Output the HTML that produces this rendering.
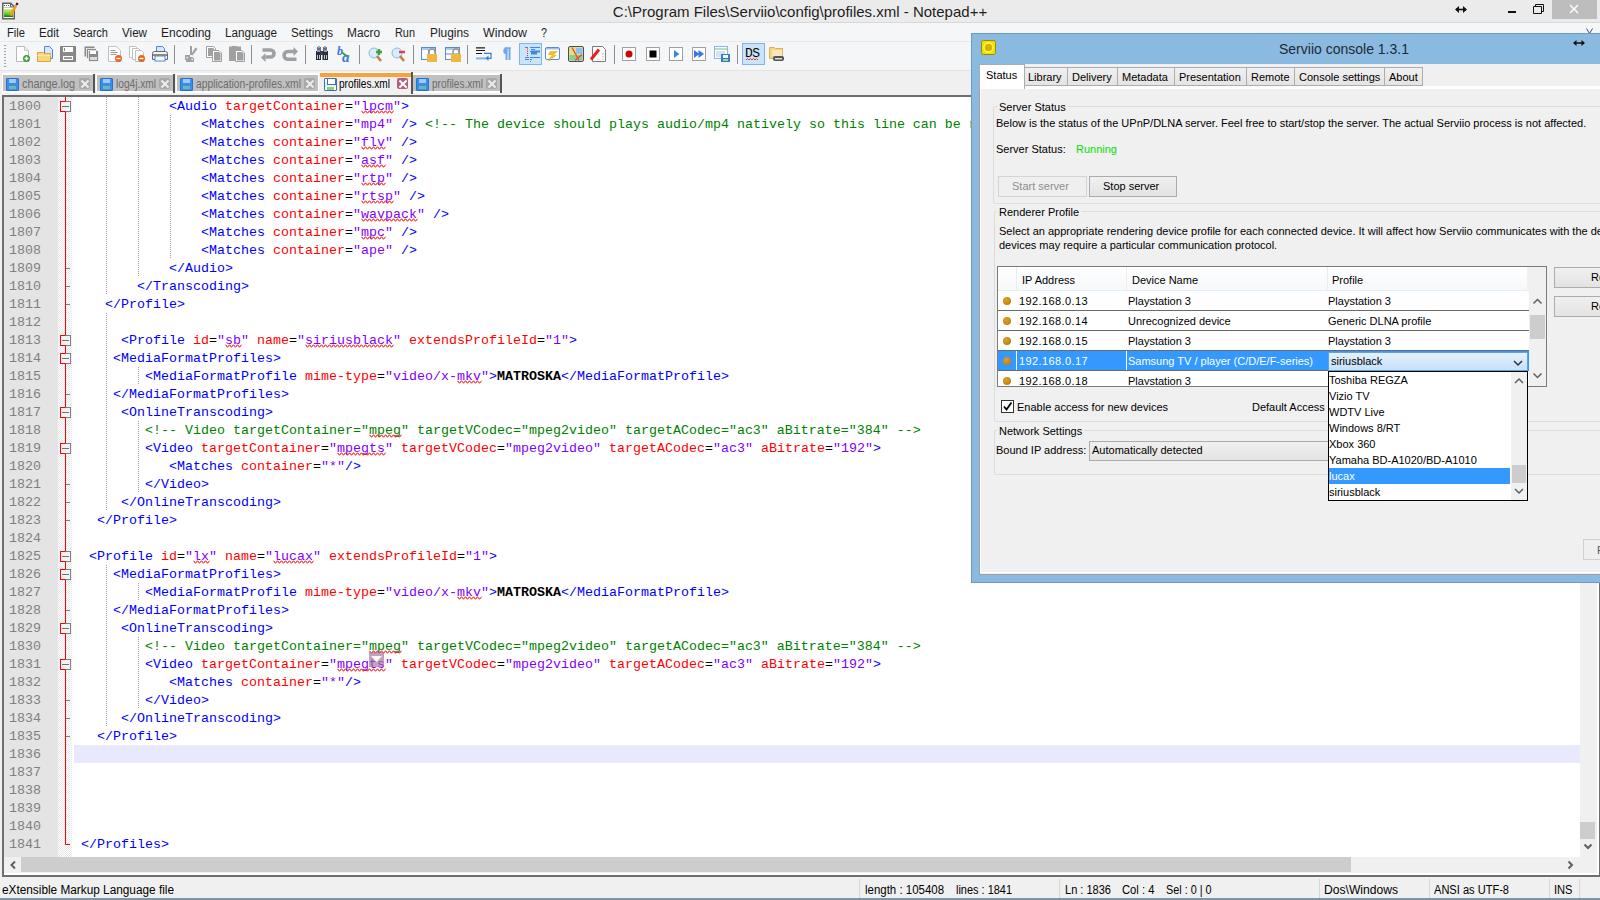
<!DOCTYPE html>
<html><head><meta charset="utf-8">
<style>
*{box-sizing:border-box;margin:0;padding:0}
html,body{width:1600px;height:900px;overflow:hidden;background:#f0f0f0;font-family:"Liberation Sans",sans-serif;font-size:12px;color:#000}
div,span{position:absolute;white-space:pre}
#titlebar{left:0;top:0;width:1600px;height:23px;background:#ebebeb;border-bottom:1px solid #d8d8d8}
#title{left:0;width:1600px;top:3px;text-align:center;font-size:15px;color:#1e1e1e}
#menubar{left:0;top:23px;width:1600px;height:19px;background:#f5f6f7;border-bottom:1px solid #e8e9ea}
.mi{top:3px;font-size:12px;color:#1e1e1e;line-height:14px;transform-origin:0 0}
#toolbar{left:0;top:42px;width:1600px;height:28px;background:#f5f6f7}
#tabbar{left:0;top:70px;width:1600px;height:25px;background:#f0f0f0;border-top:1px solid #e4e4e4}
.tt{font-size:12px;line-height:14px;transform-origin:0 0}
.flop{width:13px;height:13px;background:#3b8ee8;border:1px solid #2a72d0;border-radius:1px}
.flop::before{content:"";position:absolute;left:2px;top:0;width:7px;height:4px;background:#9ccaff}
.flop::after{content:"";position:absolute;left:2px;top:7px;width:7px;height:3px;background:#6cb8b8}
.flop.af{background:#e8f0fa;border-color:#3a70c0}
.flop.af::before{background:#fff;border:1px solid #3a70c0;border-top:none;left:2px;width:7px;height:5px}
.flop.af::after{background:#90d070;top:8px}
.flop.af{box-shadow:inset 0 4px 0 -1px #fff,inset 0 -4px 0 -1px #fff}
.tx{width:11px;height:11px;background:#a8a8a8;border-radius:2px}
.tx::before,.tx::after{content:"";position:absolute;left:0.5px;top:4.5px;width:10px;height:2px;background:#ececec;transform:rotate(45deg)}
.tx::after{transform:rotate(-45deg)}
.tx.ax{background:#b0607a}
.tx.ax::before,.tx.ax::after{background:#fff}
#edframe{left:2px;top:95px;width:1598px;height:782px;border-top:2px solid #6e6e6e;border-left:2px solid #6e6e6e;border-right:1px solid #6e6e6e;border-bottom:2px solid #6e6e6e;background:#fff}
#lnbg{left:4px;top:97px;width:54px;height:760px;background:#e4e4e4}
#foldbg{left:58px;top:97px;width:14px;height:760px;background-color:#fff;background-image:conic-gradient(#e6e6e6 25%,#fff 0 50%,#e6e6e6 0 75%,#fff 0);background-size:2px 2px}
.ln{left:4px;width:37px;text-align:right;font-family:"Liberation Mono",monospace;font-size:13.33px;line-height:18px;height:18px;color:#808080}
.cl{font-family:"Liberation Mono",monospace;font-size:13.33px;line-height:18px;height:18px;color:#000}
.cl span{position:static}
.t{color:#0000ff}.a{color:#ff0000}.v{color:#8000ff}.c{color:#008000}.b{font-weight:bold;color:#000}
.vs{color:#8000ff}
.cs{color:#008000}
.ig{width:1px;background-image:linear-gradient(#a0a0a0 50%,transparent 50%);background-size:1px 2px}
#curline{left:74px;top:745px;width:1506px;height:18px;background:#e8e8ff}
#vscroll{left:1580px;top:97px;width:17px;height:776px;background:#f0f0f0}
#vthumb{left:1580px;top:822px;width:15px;height:17px;background:#cdcdcd}
#hscroll{left:4px;top:857px;width:1576px;height:16px;background:#f0f0f0}
#hthumb{left:21px;top:857px;width:1330px;height:15px;background:#cdcdcd}
#edbot{left:4px;top:873px;width:1595px;height:2px;background:#fff}
#edright{left:1597px;top:97px;width:2px;height:778px;background:#fff}
#statusbar{left:0;top:877px;width:1600px;height:21px;background:#f0f0f0}
.sb{top:6px;transform-origin:0 0;font-size:12px;color:#000;line-height:14px}
.sbsep{top:2px;width:1px;height:19px;background:#d7d7d7}
#taskline{left:0;top:898px;width:1600px;height:2px;background:#7a96ae}
/* dialog */
#dlg{left:971px;top:33px;width:640px;height:548px;background:#8bbae0;border:1px solid #6a98c4}
#dtitle{left:308px;top:6px;font-size:14px;color:#1e2a36}
#dicon{left:12px;top:7px;width:15px;height:15px;background:#f0e000;border:1px solid #9a8a00;border-radius:2px}
#dicon::after{content:"";position:absolute;left:2px;top:2px;width:9px;height:9px;border:1.5px solid #fff86a;border-radius:50%;background:#d8b800}
#dbody{left:7px;top:30px;width:640px;height:510px;background:#f0f0f0}
.dt{font-size:11px;color:#000;line-height:13px}
.dtab{top:33px;height:19px;background:linear-gradient(#f0f0f0,#e5e5e5);border:1px solid #acacac;border-bottom:none}
.dtab .dt{top:3px}
.dtab.sel{top:31px;height:23px;background:#fff;border-color:#acacac}
.dtab.sel .dt{top:2px}
#dpanel{left:8px;top:54px;width:640px;height:486px;background:#f0f0f0;border-top:1px solid #acacac;border-left:1px solid #d9d9d9}
.grp{border:1px solid #d5dfe5;border-radius:2px}
.gtitle{background:#f0f0f0;padding:0 2px}
.btn{height:21px;border:1px solid #adadad;background:linear-gradient(#f2f2f2,#e1e1e1);border-radius:2px}
.btn.dis{border-color:#d0d0d0;background:#f0f0f0}
.btn .dt{top:3px;width:100%;text-align:center}
#table{left:1px;top:1px}
.row{height:20px;background:#fff;border-bottom:1px solid #6f6f6f}
.dot{width:8px;height:8px;border-radius:50%;background:radial-gradient(circle at 40% 35%,#e0a030,#b07800)}
</style></head><body>
<div id="titlebar"></div>
<svg width="22" height="22" style="position:absolute;left:0;top:0"><defs><linearGradient id="ng" x1="0" y1="0" x2="0" y2="1"><stop offset="0" stop-color="#e8ec60"/><stop offset=".6" stop-color="#60d030"/><stop offset="1" stop-color="#107010"/></linearGradient></defs><path d="M2.75 3.25h8l3.5 3.5v12h-11.5z" fill="#fff" stroke="#606060" stroke-width="1.5"/><path d="M10.5 3.5v3.5h3.5" fill="none" stroke="#606060" stroke-width="1.2"/><path d="M4 5.5h1M6 5.5h1M8 5.5h1" stroke="#555" stroke-width="1"/><path d="M4 7.5h6" stroke="#b8c8e0" stroke-width="1"/><rect x="4" y="9" width="9" height="8" fill="url(#ng)"/><path d="M10.5 15.5l5.5-10" stroke="#f0a010" stroke-width="2.6"/><path d="M15.8 5.8l.9-1.6" stroke="#90a8d0" stroke-width="2.4"/><rect x="16" y="2.8" width="2.2" height="2.2" fill="#900000"/></svg>
<div id="title">C:\Program Files\Serviio\config\profiles.xml - Notepad++</div>
<svg width="160" height="20" style="position:absolute;left:1440px;top:0"><path d="M16 9.5h10" stroke="#111" stroke-width="1.6"/><path d="M15 9.5l4-3.5v7zM27 9.5l-4-3.5v7z" fill="#111"/><rect x="68" y="11" width="8" height="2" fill="#111"/><path d="M93.5 6.5h8v7h-8zM95.5 6.5v-2h8v7h-2" fill="none" stroke="#111" stroke-width="1"/><rect x="112" y="0" width="45" height="19" fill="#bdbdbd"/><path d="M130 5l8 8M138 5l-8 8" stroke="#fff" stroke-width="1.4"/></svg>
<div id="menubar">
<span class="mi" style="left:7px;transform:scaleX(0.931)">File</span>
<span class="mi" style="left:39px;transform:scaleX(0.967)">Edit</span>
<span class="mi" style="left:73px;transform:scaleX(0.920)">Search</span>
<span class="mi" style="left:122px;transform:scaleX(0.969)">View</span>
<span class="mi" style="left:161px;transform:scaleX(0.999)">Encoding</span>
<span class="mi" style="left:225px;transform:scaleX(0.974)">Language</span>
<span class="mi" style="left:291px;transform:scaleX(0.969)">Settings</span>
<span class="mi" style="left:347px;transform:scaleX(0.990)">Macro</span>
<span class="mi" style="left:395px;transform:scaleX(0.908)">Run</span>
<span class="mi" style="left:430px;transform:scaleX(0.991)">Plugins</span>
<span class="mi" style="left:483px;transform:scaleX(1.031)">Window</span>
<span class="mi" style="left:541px;transform:scaleX(0.897)">?</span>
</div>
<svg width="10" height="8" style="position:absolute;left:1585px;top:27px"><path d="M1.5 1.5l3 5 3-5" fill="none" stroke="#3a4a8a" stroke-width="1"/></svg>
<div id="toolbar"></div>
<svg width="1600" height="28" style="position:absolute;left:0;top:42px"><rect x="4" y="3" width="2" height="1" fill="#a0a0a0"/><rect x="4" y="6" width="2" height="1" fill="#a0a0a0"/><rect x="4" y="9" width="2" height="1" fill="#a0a0a0"/><rect x="4" y="12" width="2" height="1" fill="#a0a0a0"/><rect x="4" y="15" width="2" height="1" fill="#a0a0a0"/><rect x="4" y="18" width="2" height="1" fill="#a0a0a0"/><rect x="4" y="21" width="2" height="1" fill="#a0a0a0"/><rect x="4" y="24" width="2" height="1" fill="#a0a0a0"/><g transform="translate(15,4)"><path d="M1.5 .5h8l4 4v11h-12z" fill="#fff" stroke="#b8b8b8"/><path d="M9.5 .5v4h4" fill="#eee" stroke="#c8c8c8"/><circle cx="11.5" cy="12.5" r="3.5" fill="#3a9a3a"/><path d="M9.5 12.5h4M11.5 10.5v4" stroke="#fff" stroke-width="1.4"/></g><g transform="translate(37,4)"><path d="M7.5 .5h5l3 3v9h-8z" fill="#d6e8fb" stroke="#4a86d8"/><path d="M.5 6.5h6l1 1h6v8h-13z" fill="#f6d77a" stroke="#e0a040"/><path d="M.5 9.5h13" stroke="#fbe9a8"/></g><g transform="translate(60,4)"><path d="M.5 .5h15v15h-15z" fill="#8a8a8a" stroke="#808080"/><rect x="3" y="1" width="10" height="5" fill="#fff"/><rect x="4" y="2" width="1" height="3" fill="#888"/><rect x="3" y="10" width="10" height="4" fill="#fff"/><rect x="4" y="11" width="8" height="2" fill="#999"/></g><g transform="translate(84,4)"><rect x=".5" y=".5" width="10" height="10" fill="#8a8a8a"/><rect x="2.5" y="2.5" width="10" height="10" fill="#8a8a8a" stroke="#f5f6f7" stroke-width=".8"/><rect x="4.5" y="4.5" width="10" height="11" fill="#8a8a8a" stroke="#f5f6f7" stroke-width=".8"/><rect x="6" y="5" width="6" height="3" fill="#fff"/><rect x="6" y="11" width="7" height="3" fill="#ddd"/></g><g transform="translate(107,4)"><path d="M1.5 .5h8l4 4v11h-12z" fill="#fff" stroke="#c0c0c0"/><path d="M3.5 4.5h5M3.5 6.5h7M3.5 8.5h6" stroke="#999"/><circle cx="11.5" cy="12.5" r="3.5" fill="#e8641e"/><path d="M9.5 12.5h4" stroke="#fff" stroke-width="1.4"/></g><g transform="translate(129,4)"><path d="M.5 .5h6l2 2v9h-8z" fill="#fff" stroke="#c0c0c0"/><path d="M3.5 2.5h6l2 2v9h-8z" fill="#fff" stroke="#c0c0c0"/><path d="M6.5 4.5h6l2 2v9h-8z" fill="#fff" stroke="#c0c0c0"/><circle cx="12.5" cy="12.5" r="3.5" fill="#e8641e"/><path d="M10.5 12.5h4" stroke="#fff" stroke-width="1.4"/></g><g transform="translate(152,4)"><path d="M4.5 .5h6l2 2v5h-8z" fill="#d6e8fb" stroke="#4a86d8"/><path d="M.5 7.5q0-2 2-2h11q2 0 2 2v6h-15z" fill="#f4f4f4" stroke="#666"/><rect x="3" y="10" width="10" height="5" fill="#fff" stroke="#4a86d8" stroke-width="1"/><rect x="1" y="8" width="14" height="2" fill="#888"/></g><rect x="174" y="3" width="1" height="19" fill="#8e8e8e"/><g transform="translate(184,4)"><path d="M6 0h2v9h-2z" fill="#a0a0a0"/><path d="M11.5 1.5l2 1.5-5 6.5-1.5-1z" fill="#a0a0a0"/><path d="M1 9h5v2h1v5h-5v-2h-1z" fill="#a0a0a0"/><rect x="2.5" y="10.8" width="1.6" height="1.6" fill="#f5f6f7"/><rect x="7.3" y="12.3" width="1.6" height="2" fill="#f5f6f7"/><path d="M6 11h3v1h1v4h-4z" fill="#a0a0a0"/><rect x="7.5" y="12.5" width="1.4" height="1.8" fill="#f5f6f7"/></g><g transform="translate(206,4)"><path d="M.5 .5h7l2 2v3h-3v6h-6z" fill="#fff" stroke="#a0a0a0"/><path d="M2 2h5l1.5 1.5v2h-2.5v4.5h-4z" fill="#a0a0a0"/><path d="M6.5 4.5h6.5l2.5 2.5v8.5h-9z" fill="#fff" stroke="#a0a0a0"/><path d="M8 6h5l1.5 1.5v7h-6.5z" fill="#a0a0a0"/></g><g transform="translate(229,4)"><path d="M0 .5h3v-.5h5v.5h4v14.5h-12z" fill="#a0a0a0"/><path d="M6.5 4.5h6.5l2.5 2.5v8.5h-9z" fill="#fff" stroke="#a0a0a0"/><path d="M8 6h5l1.5 1.5v7h-6.5z" fill="#a0a0a0"/></g><rect x="251" y="3" width="1" height="19" fill="#8e8e8e"/><g transform="translate(261,4)"><path d="M1.5 4h8a3.5 3.5 0 010 7h-5" fill="none" stroke="#a0a0a0" stroke-width="3.6"/><path d="M0 11.5l4.5-4.5v9z" fill="#a0a0a0"/></g><g transform="translate(283,4)"><path d="M11 5.5h-6a3.9 3.9 0 000 7.8h8.5" fill="none" stroke="#a0a0a0" stroke-width="3.6"/><path d="M15 5.5l-4.5-4.5v9z" fill="#a0a0a0"/></g><rect x="305" y="3" width="1" height="19" fill="#8e8e8e"/><g transform="translate(315,4)"><rect x="2" y="1" width="4" height="4" fill="#6a7080"/><rect x="8" y="1" width="4" height="4" fill="#6a7080"/><rect x="3" y="0" width="2" height="2" fill="#9aa8c0"/><rect x="9" y="0" width="2" height="2" fill="#9aa8c0"/><path d="M1 5h5v9h-5z" fill="#2a2e38"/><path d="M7.5 5h5.5v9h-5.5z" fill="#2a2e38"/><rect x="5" y="5" width="3" height="4" fill="#3a4050"/><rect x="2" y="4" width="3" height="2" fill="#8fa0c0"/><rect x="9" y="4" width="3" height="2" fill="#8fa0c0"/><rect x="2" y="9" width="1" height="4" fill="#c0c8d8"/><rect x="4" y="9" width="1" height="4" fill="#c0c8d8"/><rect x="9" y="9" width="1" height="4" fill="#c0c8d8"/><rect x="11" y="9" width="1" height="4" fill="#c0c8d8"/></g><g transform="translate(337,4)"><text x="0" y="9" font-family="Liberation Serif" font-style="italic" font-weight="bold" font-size="12" fill="#3a78e0">b</text><text x="5" y="15.5" font-family="Liberation Serif" font-style="italic" font-weight="bold" font-size="15" fill="#3a78e0">a</text><path d="M5 6.5l4.5 3.5" stroke="#30a050" stroke-width="1.6"/><path d="M10.5 11l-3.5-.5 2-2.5z" fill="#30a050"/></g><rect x="359" y="3" width="1" height="19" fill="#8e8e8e"/><g transform="translate(368,4)"><circle cx="6" cy="7" r="5" fill="#d8ecfb" stroke="#8ab8e0"/><path d="M9 10l4 5" stroke="#c08040" stroke-width="2.5"/><path d="M8 6h6M11 3v6" stroke="#40a040" stroke-width="2.5"/></g><g transform="translate(391,4)"><circle cx="6" cy="7" r="5" fill="#d8ecfb" stroke="#8ab8e0"/><path d="M9 10l4 5" stroke="#c08040" stroke-width="2.5"/><path d="M8 6h6" stroke="#e04050" stroke-width="2.5"/></g><rect x="413" y="3" width="1" height="19" fill="#8e8e8e"/><g transform="translate(421,4)"><rect x=".5" y="1.5" width="14" height="12" fill="#fff" stroke="#5a8ad0"/><rect x="1" y="2" width="13" height="2" fill="#a8c8ec"/><path d="M7.5 4v9" stroke="#5a8ad0"/><rect x="6" y="8" width="10" height="8" fill="#f0b840"/><path d="M8 8V6a3 3 0 016 0v2" fill="none" stroke="#999" stroke-width="1.5"/></g><g transform="translate(445,4)"><rect x=".5" y="1.5" width="14" height="12" fill="#fff" stroke="#5a8ad0"/><rect x="1" y="2" width="13" height="2" fill="#a8c8ec"/><path d="M1 8h13" stroke="#5a8ad0"/><rect x="6" y="8" width="10" height="8" fill="#f0b840"/><path d="M8 8V6a3 3 0 016 0v2" fill="none" stroke="#999" stroke-width="1.5"/></g><rect x="467" y="3" width="1" height="19" fill="#8e8e8e"/><g transform="translate(475,4)"><path d="M1 1.8h9M1 4.5h9M1 7.5h6" stroke="#1a1a1a" stroke-width="1.2"/><path d="M1 12.4h10" stroke="#80b4ea" stroke-width="2"/><path d="M9 7.3h7v5h-4" fill="none" stroke="#3a7ad8" stroke-width="1.2"/><path d="M10.5 12.3l3-2.8v5.6z" fill="#3a7ad8"/></g><g transform="translate(500,4)"><path d="M6.5 2v12M9.5 2v12" stroke="#70aaea" stroke-width="2"/><path d="M4.5 2h6.5" stroke="#70aaea" stroke-width="1.5"/><path d="M6.5 2.5a2.5 2.5 0 000 5z" fill="#70aaea" stroke="#70aaea" stroke-width="1.5"/></g><rect x="519.5" y="1.5" width="22" height="21" fill="#cce4f7" stroke="#7eb4ea"/><g transform="translate(522,4)"><path d="M5.5 2.5v8" stroke="#e02020" stroke-dasharray="1 1.2"/><path d="M3 1.5h3M8 1.5h10M9 3.5h4M8 5.5h10M9 7.5h6M3 11.5h4M8 11.5h10M3 13.5h4M8 13.5h2" stroke="#3a88e8" stroke-width="1"/><path d="M9 5.5h9M9 7.5h6" stroke="#3a88e8" stroke-width="2"/><rect x="8" y="15" width="1" height="1" fill="#3a88e8"/></g><g transform="translate(545,4)"><rect x=".5" y="1.5" width="14" height="12" rx="1.5" fill="#fff" stroke="#5a8ad0"/><rect x="1" y="2" width="13" height="1.5" fill="#9cc0ec"/><path d="M5 5h8l-4 4h3l-4 3.5h-4l3-3.5h-4z" fill="#f0c030"/><path d="M5.5 12l-1.5 3" stroke="#e8b020" stroke-width="1.5"/></g><g transform="translate(568,4)"><rect x=".5" y=".5" width="15" height="15" rx="1.5" fill="#e2e27a" stroke="#4a4a70"/><rect x="8" y="2" width="6.5" height="6" fill="#90c0f0"/><rect x="1.5" y="9" width="13" height="5.5" fill="#88d088"/><path d="M4 1.5l7 13M14 8.5l-7 6" stroke="#f04040" stroke-width="1.3"/></g><g transform="translate(591,4)"><path d="M1.5 .5h10l3 3v12h-13z" fill="#fff" stroke="#7a7a7a"/><path d="M0 13.5l8-10" stroke="#e82020" stroke-width="3"/><path d="M12 7v7" stroke="#b0b0b0" stroke-dasharray="1.5 1.5"/><circle cx="7" cy="8" r=".6" fill="#90c090"/><circle cx="7" cy="13" r=".6" fill="#90c090"/></g><rect x="614" y="3" width="1" height="19" fill="#8e8e8e"/><g transform="translate(622,4)"><rect x=".5" y="1.5" width="13" height="13" fill="#fff" stroke="#a0a0a0"/><circle cx="7" cy="8" r="3.5" fill="#d00000"/></g><g transform="translate(646,4)"><rect x=".5" y="1.5" width="13" height="13" fill="#fff" stroke="#a0a0a0"/><rect x="3.5" y="4.5" width="7" height="7" fill="#000"/></g><g transform="translate(669,4)"><rect x=".5" y="1.5" width="13" height="13" fill="#fff" stroke="#a0a0a0"/><path d="M5 4l5.5 4-5.5 4z" fill="#3a88e0"/></g><g transform="translate(692,4)"><rect x=".5" y="1.5" width="13" height="13" fill="#fff" stroke="#a0a0a0"/><path d="M2 4l5.5 4-5.5 4zM6.5 4l5.5 4-5.5 4z" fill="#3a78e0"/></g><g transform="translate(714,4)"><rect x=".5" y=".5" width="13" height="12" fill="#fff" stroke="#8ab8e0"/><path d="M1 3h12" stroke="#70c070"/><path d="M2 6h9M2 8h9M2 10h6" stroke="#a8c8ec"/><rect x="7" y="8" width="9" height="8" fill="#3a78d0"/><rect x="9" y="9" width="5" height="3" fill="#fff"/><rect x="9" y="13" width="5" height="2" fill="#90e090"/></g><rect x="737" y="3" width="1" height="19" fill="#8e8e8e"/><rect x="742.5" y="1.5" width="22" height="21" fill="#cce4f7" stroke="#7eb4ea"/><g transform="translate(745,4)"><text x="0" y="11" font-family="Liberation Mono" font-size="13" fill="#000" letter-spacing="-0.5">DS</text><path d="M1 14l1.5-1.5 1.5 1.5 1.5-1.5 1.5 1.5 1.5-1.5 1.5 1.5 1.5-1.5 1.5 1.5" stroke="#e03020" fill="none" stroke-width=".9"/></g><g transform="translate(769,4)"><path d="M.5 1.5h5l1 1h7v10h-13z" fill="#f6d77a" stroke="#d8b060"/><rect x="3" y="4" width="10" height="6" fill="#fbe4b8"/><rect x="4" y="10" width="11" height="5" rx="2" fill="#555"/><rect x="6" y="12" width="7" height="1.5" fill="#ddd"/></g></svg>
<div id="tabbar"></div>
<div style="left:2px;top:73px;width:92px;height:20px;background:#fff"></div>
<div style="left:3px;top:75px;width:90px;height:16px;background:#c0c0c0"></div>
<div class="flop" style="left:6px;top:78px"></div>
<span class="tt" style="left:22px;top:77px;font-size:13px;color:#6d6d6d;transform:scaleX(0.833)">change.log</span>
<div class="tx" style="left:79px;top:78px"></div>
<div style="left:96px;top:73px;width:78px;height:20px;background:#fff"></div>
<div style="left:97px;top:75px;width:76px;height:16px;background:#c0c0c0"></div>
<div class="flop" style="left:100px;top:78px"></div>
<span class="tt" style="left:116px;top:77px;font-size:13px;color:#6d6d6d;transform:scaleX(0.780)">log4j.xml</span>
<div class="tx" style="left:159px;top:78px"></div>
<div style="left:176px;top:73px;width:143px;height:20px;background:#fff"></div>
<div style="left:177px;top:75px;width:141px;height:16px;background:#c0c0c0"></div>
<div class="flop" style="left:180px;top:78px"></div>
<span class="tt" style="left:196px;top:77px;font-size:13px;color:#6d6d6d;transform:scaleX(0.794)">application-profiles.xml</span>
<div class="tx" style="left:304px;top:78px"></div>
<div style="left:319px;top:72px;width:92px;height:23px;background:#f0f0f0;border-top:1px solid #fff"></div>
<div style="left:320px;top:73px;width:91px;height:4px;background:#f9a13a"></div>
<div class="flop af" style="left:324px;top:78px"></div>
<span class="tt" style="left:339px;top:77px;font-size:13px;color:#000;transform:scaleX(0.776)">profiles.xml</span>
<div class="tx ax" style="left:397px;top:78px"></div>
<div style="left:412px;top:73px;width:89px;height:20px;background:#fff"></div>
<div style="left:413px;top:75px;width:87px;height:16px;background:#c0c0c0"></div>
<div class="flop" style="left:416px;top:78px"></div>
<span class="tt" style="left:432px;top:77px;font-size:13px;color:#6d6d6d;transform:scaleX(0.776)">profiles.xml</span>
<div class="tx" style="left:486px;top:78px"></div>
<div style="left:93px;top:74px;width:2px;height:19px;background:#555"></div>
<div style="left:173px;top:74px;width:2px;height:19px;background:#555"></div>
<div style="left:411px;top:72px;width:2px;height:22px;background:#555"></div>
<div style="left:500px;top:74px;width:2px;height:19px;background:#555"></div>
<div id="edframe"></div>
<div id="lnbg"></div>
<div id="foldbg"></div>
<div id="curline"></div>
<div class="ln" style="top:98px">1800</div>
<div class="ln" style="top:116px">1801</div>
<div class="ln" style="top:134px">1802</div>
<div class="ln" style="top:152px">1803</div>
<div class="ln" style="top:170px">1804</div>
<div class="ln" style="top:188px">1805</div>
<div class="ln" style="top:206px">1806</div>
<div class="ln" style="top:224px">1807</div>
<div class="ln" style="top:242px">1808</div>
<div class="ln" style="top:260px">1809</div>
<div class="ln" style="top:278px">1810</div>
<div class="ln" style="top:296px">1811</div>
<div class="ln" style="top:314px">1812</div>
<div class="ln" style="top:332px">1813</div>
<div class="ln" style="top:350px">1814</div>
<div class="ln" style="top:368px">1815</div>
<div class="ln" style="top:386px">1816</div>
<div class="ln" style="top:404px">1817</div>
<div class="ln" style="top:422px">1818</div>
<div class="ln" style="top:440px">1819</div>
<div class="ln" style="top:458px">1820</div>
<div class="ln" style="top:476px">1821</div>
<div class="ln" style="top:494px">1822</div>
<div class="ln" style="top:512px">1823</div>
<div class="ln" style="top:530px">1824</div>
<div class="ln" style="top:548px">1825</div>
<div class="ln" style="top:566px">1826</div>
<div class="ln" style="top:584px">1827</div>
<div class="ln" style="top:602px">1828</div>
<div class="ln" style="top:620px">1829</div>
<div class="ln" style="top:638px">1830</div>
<div class="ln" style="top:656px">1831</div>
<div class="ln" style="top:674px">1832</div>
<div class="ln" style="top:692px">1833</div>
<div class="ln" style="top:710px">1834</div>
<div class="ln" style="top:728px">1835</div>
<div class="ln" style="top:746px">1836</div>
<div class="ln" style="top:764px">1837</div>
<div class="ln" style="top:782px">1838</div>
<div class="ln" style="top:800px">1839</div>
<div class="ln" style="top:818px">1840</div>
<div class="ln" style="top:836px">1841</div>
<svg width="14" height="760" style="position:absolute;left:58px;top:97px"><path d="M7.5 0V747.5H12" fill="none" stroke="#ff0000" stroke-width="1"/><rect x="2.5" y="4.5" width="10" height="10" fill="#f3f3f3" stroke="#808080"/><path d="M7.5 4.5H2.5V14.5H7.5" fill="none" stroke="#ff0000"/><path d="M4 9.5H11" stroke="#707070"/><rect x="2.5" y="238.5" width="10" height="10" fill="#f3f3f3" stroke="#808080"/><path d="M7.5 238.5H2.5V248.5H7.5" fill="none" stroke="#ff0000"/><path d="M4 243.5H11" stroke="#707070"/><rect x="2.5" y="256.5" width="10" height="10" fill="#f3f3f3" stroke="#808080"/><path d="M7.5 256.5H2.5V266.5H7.5" fill="none" stroke="#ff0000"/><path d="M4 261.5H11" stroke="#707070"/><rect x="2.5" y="310.5" width="10" height="10" fill="#f3f3f3" stroke="#808080"/><path d="M7.5 310.5H2.5V320.5H7.5" fill="none" stroke="#ff0000"/><path d="M4 315.5H11" stroke="#707070"/><rect x="2.5" y="346.5" width="10" height="10" fill="#f3f3f3" stroke="#808080"/><path d="M7.5 346.5H2.5V356.5H7.5" fill="none" stroke="#ff0000"/><path d="M4 351.5H11" stroke="#707070"/><rect x="2.5" y="454.5" width="10" height="10" fill="#f3f3f3" stroke="#808080"/><path d="M7.5 454.5H2.5V464.5H7.5" fill="none" stroke="#ff0000"/><path d="M4 459.5H11" stroke="#707070"/><rect x="2.5" y="472.5" width="10" height="10" fill="#f3f3f3" stroke="#808080"/><path d="M7.5 472.5H2.5V482.5H7.5" fill="none" stroke="#ff0000"/><path d="M4 477.5H11" stroke="#707070"/><rect x="2.5" y="526.5" width="10" height="10" fill="#f3f3f3" stroke="#808080"/><path d="M7.5 526.5H2.5V536.5H7.5" fill="none" stroke="#ff0000"/><path d="M4 531.5H11" stroke="#707070"/><rect x="2.5" y="562.5" width="10" height="10" fill="#f3f3f3" stroke="#808080"/><path d="M7.5 562.5H2.5V572.5H7.5" fill="none" stroke="#ff0000"/><path d="M4 567.5H11" stroke="#707070"/><path d="M8 171.5H12" stroke="#808080"/><path d="M8 189.5H12" stroke="#808080"/><path d="M8 207.5H12" stroke="#808080"/><path d="M8 297.5H12" stroke="#808080"/><path d="M8 387.5H12" stroke="#808080"/><path d="M8 405.5H12" stroke="#808080"/><path d="M8 423.5H12" stroke="#808080"/><path d="M8 513.5H12" stroke="#808080"/><path d="M8 603.5H12" stroke="#808080"/><path d="M8 621.5H12" stroke="#808080"/><path d="M8 639.5H12" stroke="#808080"/></svg>
<div class="ig" style="left:106px;top:97px;height:198px"></div>
<div class="ig" style="left:106px;top:313px;height:198px"></div>
<div class="ig" style="left:106px;top:565px;height:162px"></div>
<div class="ig" style="left:138px;top:97px;height:180px"></div>
<div class="ig" style="left:138px;top:367px;height:18px"></div>
<div class="ig" style="left:138px;top:421px;height:72px"></div>
<div class="ig" style="left:138px;top:583px;height:18px"></div>
<div class="ig" style="left:138px;top:637px;height:72px"></div>
<div class="ig" style="left:170px;top:115px;height:144px"></div>
<div class="cl" style="top:98px;left:169px"><span class="t">&lt;Audio</span> <span class="a">targetContainer</span>=<span class="v">"</span><span class="vs">lpcm</span><span class="v">"</span><span class="t">&gt;</span></div>
<div class="cl" style="top:116px;left:201px"><span class="t">&lt;Matches</span> <span class="a">container</span>=<span class="v">"mp4"</span> <span class="t">/&gt;</span> <span class="c">&lt;!-- The device should plays audio/mp4 natively so this line can be removed --&gt;</span></div>
<div class="cl" style="top:134px;left:201px"><span class="t">&lt;Matches</span> <span class="a">container</span>=<span class="v">"</span><span class="vs">flv</span><span class="v">"</span><span class="t"> /&gt;</span></div>
<div class="cl" style="top:152px;left:201px"><span class="t">&lt;Matches</span> <span class="a">container</span>=<span class="v">"</span><span class="vs">asf</span><span class="v">"</span><span class="t"> /&gt;</span></div>
<div class="cl" style="top:170px;left:201px"><span class="t">&lt;Matches</span> <span class="a">container</span>=<span class="v">"</span><span class="vs">rtp</span><span class="v">"</span><span class="t"> /&gt;</span></div>
<div class="cl" style="top:188px;left:201px"><span class="t">&lt;Matches</span> <span class="a">container</span>=<span class="v">"</span><span class="vs">rtsp</span><span class="v">"</span><span class="t"> /&gt;</span></div>
<div class="cl" style="top:206px;left:201px"><span class="t">&lt;Matches</span> <span class="a">container</span>=<span class="v">"</span><span class="vs">wavpack</span><span class="v">"</span><span class="t"> /&gt;</span></div>
<div class="cl" style="top:224px;left:201px"><span class="t">&lt;Matches</span> <span class="a">container</span>=<span class="v">"</span><span class="vs">mpc</span><span class="v">"</span><span class="t"> /&gt;</span></div>
<div class="cl" style="top:242px;left:201px"><span class="t">&lt;Matches</span> <span class="a">container</span>=<span class="v">"ape"</span><span class="t"> /&gt;</span></div>
<div class="cl" style="top:260px;left:169px"><span class="t">&lt;/Audio&gt;</span></div>
<div class="cl" style="top:278px;left:137px"><span class="t">&lt;/Transcoding&gt;</span></div>
<div class="cl" style="top:296px;left:105px"><span class="t">&lt;/Profile&gt;</span></div>
<div class="cl" style="top:332px;left:121px"><span class="t">&lt;Profile</span> <span class="a">id</span>=<span class="v">"</span><span class="vs">sb</span><span class="v">"</span> <span class="a">name</span>=<span class="v">"</span><span class="vs">siriusblack</span><span class="v">"</span> <span class="a">extendsProfileId</span>=<span class="v">"1"</span><span class="t">&gt;</span></div>
<div class="cl" style="top:350px;left:113px"><span class="t">&lt;MediaFormatProfiles&gt;</span></div>
<div class="cl" style="top:368px;left:145px"><span class="t">&lt;MediaFormatProfile</span> <span class="a">mime-type</span>=<span class="v">"video/x-</span><span class="vs">mkv</span><span class="v">"</span><span class="t">&gt;</span><span class="b">MATROSKA</span><span class="t">&lt;/MediaFormatProfile&gt;</span></div>
<div class="cl" style="top:386px;left:113px"><span class="t">&lt;/MediaFormatProfiles&gt;</span></div>
<div class="cl" style="top:404px;left:121px"><span class="t">&lt;OnlineTranscoding&gt;</span></div>
<div class="cl" style="top:422px;left:145px"><span class="c">&lt;!-- Video targetContainer="</span><span class="cs">mpeg</span><span class="c">" targetVCodec="mpeg2video" targetACodec="ac3" aBitrate="384" --&gt;</span></div>
<div class="cl" style="top:440px;left:145px"><span class="t">&lt;Video</span> <span class="a">targetContainer</span>=<span class="v">"</span><span class="vs">mpegts</span><span class="v">"</span> <span class="a">targetVCodec</span>=<span class="v">"mpeg2video"</span> <span class="a">targetACodec</span>=<span class="v">"ac3"</span> <span class="a">aBitrate</span>=<span class="v">"192"</span><span class="t">&gt;</span></div>
<div class="cl" style="top:458px;left:169px"><span class="t">&lt;Matches</span> <span class="a">container</span>=<span class="v">"*"</span><span class="t">/&gt;</span></div>
<div class="cl" style="top:476px;left:145px"><span class="t">&lt;/Video&gt;</span></div>
<div class="cl" style="top:494px;left:121px"><span class="t">&lt;/OnlineTranscoding&gt;</span></div>
<div class="cl" style="top:512px;left:97px"><span class="t">&lt;/Profile&gt;</span></div>
<div class="cl" style="top:548px;left:89px"><span class="t">&lt;Profile</span> <span class="a">id</span>=<span class="v">"</span><span class="vs">lx</span><span class="v">"</span> <span class="a">name</span>=<span class="v">"</span><span class="vs">lucax</span><span class="v">"</span> <span class="a">extendsProfileId</span>=<span class="v">"1"</span><span class="t">&gt;</span></div>
<div class="cl" style="top:566px;left:113px"><span class="t">&lt;MediaFormatProfiles&gt;</span></div>
<div class="cl" style="top:584px;left:145px"><span class="t">&lt;MediaFormatProfile</span> <span class="a">mime-type</span>=<span class="v">"video/x-</span><span class="vs">mkv</span><span class="v">"</span><span class="t">&gt;</span><span class="b">MATROSKA</span><span class="t">&lt;/MediaFormatProfile&gt;</span></div>
<div class="cl" style="top:602px;left:113px"><span class="t">&lt;/MediaFormatProfiles&gt;</span></div>
<div class="cl" style="top:620px;left:121px"><span class="t">&lt;OnlineTranscoding&gt;</span></div>
<div class="cl" style="top:638px;left:145px"><span class="c">&lt;!-- Video targetContainer="</span><span class="cs">mpeg</span><span class="c">" targetVCodec="mpeg2video" targetACodec="ac3" aBitrate="384" --&gt;</span></div>
<div class="cl" style="top:656px;left:145px"><span class="t">&lt;Video</span> <span class="a">targetContainer</span>=<span class="v">"</span><span class="vs">mpegts</span><span class="v">"</span> <span class="a">targetVCodec</span>=<span class="v">"mpeg2video"</span> <span class="a">targetACodec</span>=<span class="v">"ac3"</span> <span class="a">aBitrate</span>=<span class="v">"192"</span><span class="t">&gt;</span></div>
<div class="cl" style="top:674px;left:169px"><span class="t">&lt;Matches</span> <span class="a">container</span>=<span class="v">"*"</span><span class="t">/&gt;</span></div>
<div class="cl" style="top:692px;left:145px"><span class="t">&lt;/Video&gt;</span></div>
<div class="cl" style="top:710px;left:121px"><span class="t">&lt;/OnlineTranscoding&gt;</span></div>
<div class="cl" style="top:728px;left:97px"><span class="t">&lt;/Profile&gt;</span></div>
<div class="cl" style="top:836px;left:81px"><span class="t">&lt;/Profiles&gt;</span></div>
<svg width="33" height="4" style="position:absolute;left:361px;top:110px"><polyline points="0,0 2,2.5 4,0 6,2.5 8,0 10,2.5 12,0 14,2.5 16,0 18,2.5 20,0 22,2.5 24,0 26,2.5 28,0 30,2.5 32,0" transform="translate(0.5,0.75)" fill="none" stroke="#ff0000" stroke-width="1"/></svg>
<svg width="25" height="4" style="position:absolute;left:361px;top:146px"><polyline points="0,0 2,2.5 4,0 6,2.5 8,0 10,2.5 12,0 14,2.5 16,0 18,2.5 20,0 22,2.5 24,0" transform="translate(0.5,0.75)" fill="none" stroke="#ff0000" stroke-width="1"/></svg>
<svg width="25" height="4" style="position:absolute;left:361px;top:164px"><polyline points="0,0 2,2.5 4,0 6,2.5 8,0 10,2.5 12,0 14,2.5 16,0 18,2.5 20,0 22,2.5 24,0" transform="translate(0.5,0.75)" fill="none" stroke="#ff0000" stroke-width="1"/></svg>
<svg width="25" height="4" style="position:absolute;left:361px;top:182px"><polyline points="0,0 2,2.5 4,0 6,2.5 8,0 10,2.5 12,0 14,2.5 16,0 18,2.5 20,0 22,2.5 24,0" transform="translate(0.5,0.75)" fill="none" stroke="#ff0000" stroke-width="1"/></svg>
<svg width="33" height="4" style="position:absolute;left:361px;top:200px"><polyline points="0,0 2,2.5 4,0 6,2.5 8,0 10,2.5 12,0 14,2.5 16,0 18,2.5 20,0 22,2.5 24,0 26,2.5 28,0 30,2.5 32,0" transform="translate(0.5,0.75)" fill="none" stroke="#ff0000" stroke-width="1"/></svg>
<svg width="57" height="4" style="position:absolute;left:361px;top:218px"><polyline points="0,0 2,2.5 4,0 6,2.5 8,0 10,2.5 12,0 14,2.5 16,0 18,2.5 20,0 22,2.5 24,0 26,2.5 28,0 30,2.5 32,0 34,2.5 36,0 38,2.5 40,0 42,2.5 44,0 46,2.5 48,0 50,2.5 52,0 54,2.5 56,0" transform="translate(0.5,0.75)" fill="none" stroke="#ff0000" stroke-width="1"/></svg>
<svg width="25" height="4" style="position:absolute;left:361px;top:236px"><polyline points="0,0 2,2.5 4,0 6,2.5 8,0 10,2.5 12,0 14,2.5 16,0 18,2.5 20,0 22,2.5 24,0" transform="translate(0.5,0.75)" fill="none" stroke="#ff0000" stroke-width="1"/></svg>
<svg width="17" height="4" style="position:absolute;left:225px;top:344px"><polyline points="0,0 2,2.5 4,0 6,2.5 8,0 10,2.5 12,0 14,2.5 16,0" transform="translate(0.5,0.75)" fill="none" stroke="#ff0000" stroke-width="1"/></svg>
<svg width="89" height="4" style="position:absolute;left:305px;top:344px"><polyline points="0,0 2,2.5 4,0 6,2.5 8,0 10,2.5 12,0 14,2.5 16,0 18,2.5 20,0 22,2.5 24,0 26,2.5 28,0 30,2.5 32,0 34,2.5 36,0 38,2.5 40,0 42,2.5 44,0 46,2.5 48,0 50,2.5 52,0 54,2.5 56,0 58,2.5 60,0 62,2.5 64,0 66,2.5 68,0 70,2.5 72,0 74,2.5 76,0 78,2.5 80,0 82,2.5 84,0 86,2.5 88,0" transform="translate(0.5,0.75)" fill="none" stroke="#ff0000" stroke-width="1"/></svg>
<svg width="25" height="4" style="position:absolute;left:457px;top:380px"><polyline points="0,0 2,2.5 4,0 6,2.5 8,0 10,2.5 12,0 14,2.5 16,0 18,2.5 20,0 22,2.5 24,0" transform="translate(0.5,0.75)" fill="none" stroke="#ff0000" stroke-width="1"/></svg>
<svg width="33" height="4" style="position:absolute;left:369px;top:434px"><polyline points="0,0 2,2.5 4,0 6,2.5 8,0 10,2.5 12,0 14,2.5 16,0 18,2.5 20,0 22,2.5 24,0 26,2.5 28,0 30,2.5 32,0" transform="translate(0.5,0.75)" fill="none" stroke="#ff0000" stroke-width="1"/></svg>
<svg width="49" height="4" style="position:absolute;left:337px;top:452px"><polyline points="0,0 2,2.5 4,0 6,2.5 8,0 10,2.5 12,0 14,2.5 16,0 18,2.5 20,0 22,2.5 24,0 26,2.5 28,0 30,2.5 32,0 34,2.5 36,0 38,2.5 40,0 42,2.5 44,0 46,2.5 48,0" transform="translate(0.5,0.75)" fill="none" stroke="#ff0000" stroke-width="1"/></svg>
<svg width="17" height="4" style="position:absolute;left:193px;top:560px"><polyline points="0,0 2,2.5 4,0 6,2.5 8,0 10,2.5 12,0 14,2.5 16,0" transform="translate(0.5,0.75)" fill="none" stroke="#ff0000" stroke-width="1"/></svg>
<svg width="41" height="4" style="position:absolute;left:273px;top:560px"><polyline points="0,0 2,2.5 4,0 6,2.5 8,0 10,2.5 12,0 14,2.5 16,0 18,2.5 20,0 22,2.5 24,0 26,2.5 28,0 30,2.5 32,0 34,2.5 36,0 38,2.5 40,0" transform="translate(0.5,0.75)" fill="none" stroke="#ff0000" stroke-width="1"/></svg>
<svg width="25" height="4" style="position:absolute;left:457px;top:596px"><polyline points="0,0 2,2.5 4,0 6,2.5 8,0 10,2.5 12,0 14,2.5 16,0 18,2.5 20,0 22,2.5 24,0" transform="translate(0.5,0.75)" fill="none" stroke="#ff0000" stroke-width="1"/></svg>
<svg width="33" height="4" style="position:absolute;left:369px;top:650px"><polyline points="0,0 2,2.5 4,0 6,2.5 8,0 10,2.5 12,0 14,2.5 16,0 18,2.5 20,0 22,2.5 24,0 26,2.5 28,0 30,2.5 32,0" transform="translate(0.5,0.75)" fill="none" stroke="#ff0000" stroke-width="1"/></svg>
<svg width="49" height="4" style="position:absolute;left:337px;top:668px"><polyline points="0,0 2,2.5 4,0 6,2.5 8,0 10,2.5 12,0 14,2.5 16,0 18,2.5 20,0 22,2.5 24,0 26,2.5 28,0 30,2.5 32,0 34,2.5 36,0 38,2.5 40,0 42,2.5 44,0 46,2.5 48,0" transform="translate(0.5,0.75)" fill="none" stroke="#ff0000" stroke-width="1"/></svg>
<div style="left:369px;top:652px;width:15px;height:15px;background:rgba(160,110,150,0.65)"></div><svg width="15" height="15" style="position:absolute;left:369px;top:652px"><path d="M2 4h11l-5.5 6z" fill="#fff"/></svg>
<div id="vscroll"></div>
<div id="vthumb"></div>
<svg width="17" height="12" style="position:absolute;left:1580px;top:841px"><path d="M4.5 3.5l3.5 3.5 3.5-3.5" fill="none" stroke="#606060" stroke-width="2"/></svg>
<div id="hscroll"></div>
<div id="hthumb"></div>
<svg width="17" height="17" style="position:absolute;left:4px;top:857px"><path d="M11 4.5l-3.5 3.5 3.5 3.5" fill="none" stroke="#606060" stroke-width="2"/></svg>
<svg width="17" height="17" style="position:absolute;left:1562px;top:857px"><path d="M6.5 4.5l3.5 3.5-3.5 3.5" fill="none" stroke="#606060" stroke-width="2"/></svg>
<div id="edbot"></div><div id="edright"></div>
<div id="statusbar">
<span class="sb" style="left:2px;transform:scaleX(0.984)">eXtensible Markup Language file</span>
<div class="sbsep" style="left:859px"></div>
<span class="sb" style="left:865px;transform:scaleX(0.955)">length : 105408</span>
<span class="sb" style="left:956px;transform:scaleX(0.912)">lines : 1841</span>
<div class="sbsep" style="left:1059px"></div>
<span class="sb" style="left:1065px;transform:scaleX(0.919)">Ln : 1836</span>
<span class="sb" style="left:1122px;transform:scaleX(0.937)">Col : 4</span>
<span class="sb" style="left:1166px;transform:scaleX(0.901)">Sel : 0 | 0</span>
<div class="sbsep" style="left:1319px"></div>
<span class="sb" style="left:1324px;transform:scaleX(1.009)">Dos\Windows</span>
<div class="sbsep" style="left:1429px"></div>
<span class="sb" style="left:1434px;transform:scaleX(0.922)">ANSI as UTF-8</span>
<div class="sbsep" style="left:1549px"></div>
<span class="sb" style="left:1554px;transform:scaleX(0.924)">INS</span>
<div class="sbsep" style="left:1579px"></div>
</div>
<div id="taskline"></div>
<div style="left:971px;top:33px;width:629px;height:550px;background:#8bbae0;border:1px solid #6d9ac6;border-right:none"></div>
<div style="left:979px;top:64px;width:621px;height:511px;background:#f0f0f0;border-bottom:1px solid #a0a0a0;border-left:1px solid #a0a0a0"></div>
<div style="left:980px;top:572px;width:620px;height:1px;background:#fff"></div>
<svg width="16" height="16" style="position:absolute;left:981px;top:40px"><rect x=".5" y=".5" width="14" height="14" rx="2" fill="#eee000" stroke="#9a8c00"/><circle cx="7.5" cy="7.5" r="4.5" fill="#d8b400" stroke="#fffa60" stroke-width="1.3"/></svg>
<span class="dt" style="left:1279px;top:41px;font-size:14px;line-height:16px;color:#1e2a36">Serviio console 1.3.1</span>
<svg width="14" height="10" style="position:absolute;left:1572px;top:38px"><path d="M2 5h10" stroke="#111" stroke-width="1.5"/><path d="M1 5l3.5-3v6zM13 5l-3.5-3v6z" fill="#111"/></svg>
<div style="left:980px;top:86px;width:620px;height:3px;background:#fff"></div>
<div style="left:980px;top:86px;width:1px;height:487px;background:#fff"></div>
<div style="left:981px;top:89px;width:619px;height:483px;background:#f0f0f0"></div>
<div style="left:1024px;top:67px;width:44px;height:19px;background:linear-gradient(#f0f0f0,#e4e4e4);border:1px solid #acacac"></div>
<span class="dt" style="left:1028px;top:71px;">Library</span>
<div style="left:1067px;top:67px;width:51px;height:19px;background:linear-gradient(#f0f0f0,#e4e4e4);border:1px solid #acacac"></div>
<span class="dt" style="left:1072px;top:71px;">Delivery</span>
<div style="left:1117px;top:67px;width:58px;height:19px;background:linear-gradient(#f0f0f0,#e4e4e4);border:1px solid #acacac"></div>
<span class="dt" style="left:1122px;top:71px;">Metadata</span>
<div style="left:1174px;top:67px;width:73px;height:19px;background:linear-gradient(#f0f0f0,#e4e4e4);border:1px solid #acacac"></div>
<span class="dt" style="left:1179px;top:71px;">Presentation</span>
<div style="left:1246px;top:67px;width:49px;height:19px;background:linear-gradient(#f0f0f0,#e4e4e4);border:1px solid #acacac"></div>
<span class="dt" style="left:1251px;top:71px;">Remote</span>
<div style="left:1294px;top:67px;width:91px;height:19px;background:linear-gradient(#f0f0f0,#e4e4e4);border:1px solid #acacac"></div>
<span class="dt" style="left:1299px;top:71px;">Console settings</span>
<div style="left:1384px;top:67px;width:39px;height:19px;background:linear-gradient(#f0f0f0,#e4e4e4);border:1px solid #acacac"></div>
<span class="dt" style="left:1389px;top:71px;">About</span>
<div style="left:979px;top:64px;width:46px;height:25px;background:#fff;border:1px solid #acacac;border-bottom:none"></div>
<span class="dt" style="left:986px;top:69px;">Status</span>
<div class="grp" style="left:993px;top:106px;width:620px;height:98px;border-color:#dcdcdc"></div>
<span class="dt" style="left:997px;top:101px;background:#f0f0f0;padding:0 2px">Server Status</span>
<span class="dt" style="left:996px;top:117px;">Below is the status of the UPnP/DLNA server. Feel free to start/stop the server. The actual Serviio process is not affected.</span>
<span class="dt" style="left:996px;top:143px;">Server Status:</span>
<span class="dt" style="left:1076px;top:143px;color:#00e000">Running</span>
<div style="left:998px;top:176px;width:89px;height:21px;border:1px solid #d4d4d4;background:#efefef"></div>
<span class="dt" style="left:1012px;top:180px;color:#8d8d8d">Start server</span>
<div style="left:1089px;top:176px;width:88px;height:21px;border:1px solid #acacac;background:linear-gradient(#f0f0f0,#e3e3e3)"></div>
<span class="dt" style="left:1103px;top:180px;">Stop server</span>
<div class="grp" style="left:994px;top:211px;width:620px;height:211px;border-color:#dcdcdc"></div>
<span class="dt" style="left:997px;top:206px;background:#f0f0f0;padding:0 2px">Renderer Profile</span>
<span class="dt" style="left:999px;top:225px;">Select an appropriate rendering device profile for each connected device. It will affect how Serviio communicates with the devices.</span>
<span class="dt" style="left:999px;top:239px;">devices may require a particular communication protocol.</span>
<div style="left:997px;top:266px;width:550px;height:121px;background:#f0f0f0;border:1px solid #7a7a7a"></div>
<div style="left:998px;top:267px;width:529px;height:24px;background:linear-gradient(#fff,#f7f8fa);border-bottom:1px solid #e4eef8"></div>
<div style="left:1016px;top:267px;width:1px;height:24px;background:#e6eef6"></div>
<div style="left:1126px;top:267px;width:1px;height:24px;background:#e6eef6"></div>
<div style="left:1327px;top:267px;width:1px;height:24px;background:#e6eef6"></div>
<span class="dt" style="left:1022px;top:274px;">IP Address</span>
<span class="dt" style="left:1132px;top:274px;">Device Name</span>
<span class="dt" style="left:1332px;top:274px;">Profile</span>
<div style="left:998px;top:291px;width:531px;height:20px;background:#fff;overflow:hidden"></div>
<div style="left:998px;top:310px;width:531px;height:1px;background:#6a6a6a"></div>
<div class="dot" style="left:1003px;top:297px"></div>
<span class="dt" style="left:1019px;top:295px;color:#000;letter-spacing:0.4px;">192.168.0.13</span>
<span class="dt" style="left:1128px;top:295px;color:#000;">Playstation 3</span>
<span class="dt" style="left:1328px;top:295px;">Playstation 3</span>
<div style="left:998px;top:311px;width:531px;height:20px;background:#fff;overflow:hidden"></div>
<div style="left:998px;top:330px;width:531px;height:1px;background:#6a6a6a"></div>
<div class="dot" style="left:1003px;top:317px"></div>
<span class="dt" style="left:1019px;top:315px;color:#000;letter-spacing:0.4px;">192.168.0.14</span>
<span class="dt" style="left:1128px;top:315px;color:#000;">Unrecognized device</span>
<span class="dt" style="left:1328px;top:315px;">Generic DLNA profile</span>
<div style="left:998px;top:331px;width:531px;height:20px;background:#fff;overflow:hidden"></div>
<div style="left:998px;top:350px;width:531px;height:1px;background:#6a6a6a"></div>
<div class="dot" style="left:1003px;top:337px"></div>
<span class="dt" style="left:1019px;top:335px;color:#000;letter-spacing:0.4px;">192.168.0.15</span>
<span class="dt" style="left:1128px;top:335px;color:#000;">Playstation 3</span>
<span class="dt" style="left:1328px;top:335px;">Playstation 3</span>
<div style="left:998px;top:351px;width:531px;height:20px;background:#3399ff;overflow:hidden"></div>
<div style="left:998px;top:370px;width:531px;height:1px;background:#6a6a6a"></div>
<div class="dot" style="left:1003px;top:357px"></div>
<span class="dt" style="left:1019px;top:355px;color:#fff;letter-spacing:0.4px;">192.168.0.17</span>
<span class="dt" style="left:1128px;top:355px;color:#fff;">Samsung TV / player (C/D/E/F-series)</span>
<div style="left:1016px;top:351px;width:1px;height:19px;background:#fff"></div>
<div style="left:1126px;top:351px;width:1px;height:19px;background:#fff"></div>
<div style="left:998px;top:371px;width:531px;height:15px;background:#fff;overflow:hidden"></div>
<div class="dot" style="left:1003px;top:377px"></div>
<span class="dt" style="left:1019px;top:375px;color:#000;letter-spacing:0.4px;clip-path:inset(0 0 3px 0);">192.168.0.18</span>
<span class="dt" style="left:1128px;top:375px;color:#000;clip-path:inset(0 0 3px 0);">Playstation 3</span>
<span class="dt" style="left:1328px;top:375px;clip-path:inset(0 0 3px 0);">Playstation 3</span>
<div style="left:1529px;top:291px;width:17px;height:95px;background:#f0f0f0"></div>
<div style="left:1530px;top:315px;width:15px;height:24px;background:#cdcdcd"></div>
<svg width="17" height="95" style="position:absolute;left:1529px;top:291px"><path d="M4.5 12.5l4-4 4 4" fill="none" stroke="#606060" stroke-width="1.5"/><path d="M4.5 82.5l4 4 4-4" fill="none" stroke="#606060" stroke-width="1.5"/></svg>
<div style="left:1328px;top:352px;width:200px;height:19px;background:linear-gradient(#e5f1fc,#c5e1fb);border:1px solid #5fa2e0"></div>
<span class="dt" style="left:1331px;top:355px;">siriusblack</span>
<svg width="12" height="10" style="position:absolute;left:1512px;top:358px"><path d="M2 3l4 4 4-4" fill="none" stroke="#333" stroke-width="1.5"/></svg>
<div style="left:1554px;top:267px;width:60px;height:21px;border:1px solid #acacac;background:linear-gradient(#f0f0f0,#e3e3e3)"></div>
<span class="dt" style="left:1591px;top:271px;">Re</span>
<div style="left:1554px;top:296px;width:60px;height:21px;border:1px solid #acacac;background:linear-gradient(#f0f0f0,#e3e3e3)"></div>
<span class="dt" style="left:1591px;top:300px;">Re</span>
<div style="left:1001px;top:400px;width:13px;height:13px;border:1px solid #333;background:#fff"></div>
<svg width="13" height="13" style="position:absolute;left:1001px;top:400px"><path d="M3 6.5l2.5 3 5-7" fill="none" stroke="#000" stroke-width="1.8"/></svg>
<span class="dt" style="left:1017px;top:401px;">Enable access for new devices</span>
<span class="dt" style="left:1252px;top:401px;">Default Access</span>
<div class="grp" style="left:994px;top:430px;width:620px;height:45px;border-color:#dcdcdc"></div>
<span class="dt" style="left:997px;top:425px;background:#f0f0f0;padding:0 2px">Network Settings</span>
<span class="dt" style="left:996px;top:444px;">Bound IP address:</span>
<div style="left:1089px;top:441px;width:300px;height:20px;border:1px solid #acacac;background:linear-gradient(#f0f0f0,#e4e4e4)"></div>
<span class="dt" style="left:1092px;top:444px;">Automatically detected</span>
<div style="left:1583px;top:539px;width:30px;height:21px;border:1px solid #d0d0d0;background:#efefef"></div>
<span class="dt" style="left:1597px;top:544px;color:#555">R</span>
<div style="left:1328px;top:371px;width:200px;height:130px;background:#fff;border:1px solid #000"></div>
<span class="dt" style="left:1329px;top:374px;">Toshiba REGZA</span>
<span class="dt" style="left:1329px;top:390px;">Vizio TV</span>
<span class="dt" style="left:1329px;top:406px;">WDTV Live</span>
<span class="dt" style="left:1329px;top:422px;">Windows 8/RT</span>
<span class="dt" style="left:1329px;top:438px;">Xbox 360</span>
<span class="dt" style="left:1329px;top:454px;">Yamaha BD-A1020/BD-A1010</span>
<div style="left:1329px;top:468px;width:181px;height:16px;background:#3399ff"></div>
<span class="dt" style="left:1329px;top:470px;color:#fff">lucax</span>
<span class="dt" style="left:1329px;top:486px;">siriusblack</span>
<div style="left:1511px;top:372px;width:16px;height:128px;background:#f0f0f0"></div>
<div style="left:1512px;top:465px;width:14px;height:18px;background:#cdcdcd"></div>
<svg width="16" height="128" style="position:absolute;left:1511px;top:372px"><path d="M4 11l4-4 4 4" fill="none" stroke="#606060" stroke-width="1.5"/><path d="M4 117l4 4 4-4" fill="none" stroke="#606060" stroke-width="1.5"/></svg>
</body></html>
